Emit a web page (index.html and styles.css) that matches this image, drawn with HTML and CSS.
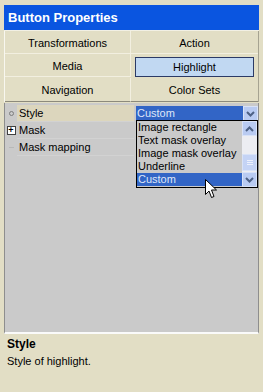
FILE: index.html
```html
<!DOCTYPE html>
<html lang="en">
<head>
    <meta charset="UTF-8">
    <title>Button Properties</title>
    <link rel="stylesheet" href="styles.css">
</head>
<body>
    <div class="panel">
        <div class="title">Button Properties</div>
        <div class="tabs">
            <div class="tab">Transformations</div>
            <div class="tab">Action</div>
            <div class="tab">Media</div>
            <div class="tab active">Highlight</div>
            <div class="tab">Navigation</div>
            <div class="tab">Color Sets</div>
        </div>
        <div class="grid">
            <div class="row selected">
                <div class="mark"><span class="dot"></span></div>
                <div class="label">Style</div>
                <div class="value">
                    <div class="combo">
                        <span class="combo-text">Custom</span>
                        <span class="combo-btn">
                            <svg width="9" height="6" viewBox="0 0 9 6"><path d="M1 1 L4.5 4.5 L8 1" fill="none" stroke="#4d6185" stroke-width="2"/></svg>
                        </span>
                    </div>
                    <div class="list">
                        <div class="items">
                            <div class="item">Image rectangle</div>
                            <div class="item">Text mask overlay</div>
                            <div class="item">Image mask overlay</div>
                            <div class="item">Underline</div>
                            <div class="item on">Custom</div>
                        </div>
                        <div class="scroll">
                            <span class="sbtn">
                                <svg width="9" height="6" viewBox="0 0 9 6"><path d="M1 5 L4.5 1.5 L8 5" fill="none" stroke="#4d6185" stroke-width="2"/></svg>
                            </span>
                            <span class="track"><span class="thumb"><i></i><i></i><i></i></span></span>
                            <span class="sbtn">
                                <svg width="9" height="6" viewBox="0 0 9 6"><path d="M1 1 L4.5 4.5 L8 1" fill="none" stroke="#4d6185" stroke-width="2"/></svg>
                            </span>
                        </div>
                    </div>
                    <svg class="cursor" width="13" height="20" viewBox="0 0 13 20"><path d="M0.5 0.5 L0.5 15.5 L4 12 L6.5 18.5 L9 17.5 L6.5 11 L11.5 11 Z" fill="#fff" stroke="#000" stroke-width="1"/></svg>
                </div>
            </div>
            <div class="row">
                <div class="mark"><span class="plus">+</span></div>
                <div class="label">Mask</div>
                <div class="value"></div>
            </div>
            <div class="row">
                <div class="mark"><span class="dash"></span></div>
                <div class="label">Mask mapping</div>
                <div class="value"></div>
            </div>
        </div>
        <div class="desc">
            <div class="desc-title">Style</div>
            <div class="desc-text">Style of highlight.</div>
        </div>
    </div>
</body>
</html>
```

FILE: styles.css
```css
body {
    margin: 0;
    background-color: #e2dec5;
    font-family: "Liberation Sans", Arial, sans-serif;
    font-size: 11px;
    color: #000;
}
.panel {
    padding: 5px 4px 0 4px;
}
.title {
    background-color: #0a55e0;
    color: #fff;
    font-weight: bold;
    font-size: 13px;
    height: 25px;
    line-height: 25px;
    padding-left: 4px;
    border-bottom: 1px solid #f2f0e4;
}
.tabs {
    display: grid;
    grid-template-columns: 126px 1fr;
    border-left: 1px solid #f8f7ef;
    border-right: 1px solid #a6a391;
}
.tab {
    height: 23px;
    line-height: 24px;
    text-align: center;
    border-bottom: 1px solid #f2efe0;
    border-right: 1px solid #f2efe0;
    box-sizing: border-box;
}
.tab:nth-child(2n) {
    border-right: none;
}
.tab.active {
    background-color: #c1d8f2;
    border: 1px solid #2b3a66;
    margin: 3px 4px 1px 4px;
    height: 20px;
    line-height: 19px;
}
.tab:nth-child(5), .tab:nth-child(6) {
    height: 24px;
    border-bottom: 1px solid #8c8a7c;
}
.grid {
    background-color: #cacaca;
    height: 227px;
    border-left: 1px solid #8e8e8e;
    border-right: 1px solid #8e8e8e;
    border-bottom: 2px solid #fafafa;
    padding-top: 2px;
    margin-top: 1px;
}
.row {
    display: flex;
    height: 17px;
    line-height: 17px;
}
.mark {
    width: 12px;
    flex: none;
    display: flex;
    align-items: center;
    justify-content: center;
}
.dot {
    width: 3px;
    height: 3px;
    border: 1px solid #7d7d7d;
    border-radius: 50%;
}
.plus {
    width: 7px;
    height: 7px;
    border: 1px solid #404040;
    background-color: #fff;
    font-size: 9px;
    line-height: 7px;
    text-align: center;
    font-weight: bold;
}
.dash {
    width: 5px;
    height: 1px;
    background-color: #b8b8b8;
}
.label {
    width: 115px;
    flex: none;
    padding-left: 2px;
    border-bottom: 1px solid #d2d2d2;
}
.row.selected .label {
    background-color: #dcd6bd;
}
.value {
    flex: 1;
    position: relative;
    padding-left: 2px;
}
.combo {
    display: flex;
    height: 15px;
    margin-top: 1px;
}
.combo-text {
    flex: 1;
    background-color: #3265c6;
    color: #dfe7f8;
    line-height: 15px;
    padding-left: 1px;
}
.combo-btn, .sbtn {
    width: 15px;
    height: 15px;
    flex: none;
    background-color: #b9cbf2;
    display: flex;
    align-items: center;
    justify-content: center;
    box-sizing: border-box;
    border: 1px solid #d8e2f7;
}
.list {
    position: absolute;
    left: 2px;
    right: 0;
    top: 15px;
    height: 68px;
    border: 1px solid #000;
    background-color: #cacaca;
    display: flex;
    z-index: 2;
    box-sizing: border-box;
}
.items {
    flex: 1;
}
.item {
    height: 13px;
    line-height: 13px;
    padding-left: 1px;
    white-space: nowrap;
}
.item.on {
    background-color: #3265c6;
    color: #dfe7f8;
}
.scroll {
    width: 15px;
    display: flex;
    flex-direction: column;
    background-color: #ecedf2;
}
.track {
    flex: 1;
    display: flex;
    align-items: flex-end;
}
.thumb {
    width: 15px;
    height: 17px;
    margin-bottom: 1px;
    background-color: #c4d3f5;
    border: 1px solid #d8e2f7;
    box-sizing: border-box;
    display: flex;
    flex-direction: column;
    align-items: center;
    justify-content: center;
    gap: 1px;
}
.thumb i {
    display: block;
    width: 6px;
    height: 1px;
    background-color: #ecf0fc;
}
.cursor {
    position: absolute;
    left: 71px;
    top: 74px;
    z-index: 3;
}
.desc {
    padding: 3px 3px 0 3px;
}
.desc-title {
    font-weight: bold;
    font-size: 12px;
    height: 18px;
}
```
